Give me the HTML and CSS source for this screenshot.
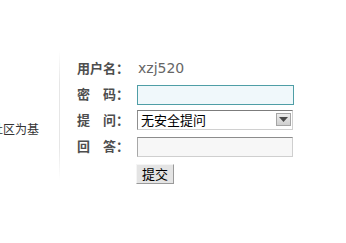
FILE: index.html
```html
<!DOCTYPE html>
<html>
<head>
<meta charset="utf-8">
<link rel="stylesheet" href="styles.css">
</head>
<body>
<div class="page">
  <div class="side"><span class="side-text">社区为基</span></div>
  <div class="divider"></div>
  <form class="login">
    <label class="lbl">用户名：</label>
    <span class="uname">xzj520</span>
    <label class="lbl">密　码：</label>
    <input class="field field-focus" type="password">
    <label class="lbl">提　问：</label>
    <div class="select">
      <span class="select-text">无安全提问</span>
      <span class="select-arrow"><svg width="9" height="5" viewBox="0 0 9 5"><path d="M0 0H9L4.5 5Z" fill="#4a4a4a"/></svg></span>
    </div>
    <label class="lbl">回　答：</label>
    <input class="field field-plain" type="text">
    <span></span>
    <div><button class="btn" type="button">提交</button></div>
  </form>
</div>
</body>
</html>
```

FILE: styles.css
```css
html, body {
  margin: 0;
  padding: 0;
  background: #fff;
}
.page {
  display: flex;
  width: 346px;
  height: 243px;
  overflow: hidden;
  font-family: "Noto Sans CJK SC", "DejaVu Sans", sans-serif;
}
.side {
  width: 59px;
  overflow: hidden;
  padding-top: 122px;
  box-sizing: border-box;
  flex: none;
}
.side-text {
  display: block;
  margin-left: -9px;
  white-space: nowrap;
  font-size: 12px;
  line-height: 14px;
  color: #333;
}
.divider {
  flex: none;
  width: 1px;
  margin-top: 50px;
  height: 130px;
  background: linear-gradient(to bottom, #fff, #e6e6e6 25%, #e6e6e6 75%, #fff);
}
.login {
  margin: 55px 0 0 17px;
  display: grid;
  grid-template-columns: 60px 157px;
  grid-auto-rows: 26px;
  align-items: center;
  align-content: start;
}
.lbl {
  font-size: 13px;
  font-weight: bold;
  color: #4e4e4e;
  white-space: nowrap;
  line-height: 16px;
}
.uname {
  font-family: "DejaVu Sans", sans-serif;
  font-size: 14px;
  color: #666;
  padding-left: 1px;
}
.field {
  box-sizing: border-box;
  width: 157px;
  height: 20px;
  margin: 0;
  padding: 0 3px;
  outline: none;
}
.field-focus {
  border: 1px solid #4f9ea6;
  background: #f0f8fb;
  margin-top: 1px;
}
.field-plain {
  width: 156px;
  border: 1px solid #cfcfcf;
  border-top-color: #8c8c8c;
  border-left-color: #a8a8a8;
  background: #f7f7f7;
  margin-top: 1px;
}
.select {
  box-sizing: border-box;
  width: 156px;
  height: 20px;
  display: flex;
  align-items: center;
  justify-content: space-between;
  border: 1px solid #d0d0d0;
  border-top-color: #7c7c7c;
  border-left-color: #8e8e8e;
  background: #fff;
  padding: 0 1px 0 3px;
  margin-top: -1px;
}
.select-text {
  font-size: 13px;
  line-height: 16px;
  color: #000;
}
.select-arrow {
  box-sizing: border-box;
  width: 15px;
  height: 13px;
  display: flex;
  align-items: center;
  justify-content: center;
  border: 1px solid #a5a5a5;
  background: linear-gradient(to bottom, #ececec, #cfcfcf);
}
.btn {
  box-sizing: border-box;
  height: 20px;
  width: 38px;
  padding: 0;
  margin: 1px 0 0 -1px;
  font-family: "Noto Sans CJK SC", sans-serif;
  font-size: 13px;
  line-height: 16px;
  color: #000;
  background: #e4e4e4;
  border: 1px solid #9a9a9a;
  border-top-color: #f5f5f5;
  border-left-color: #f5f5f5;
}
```
